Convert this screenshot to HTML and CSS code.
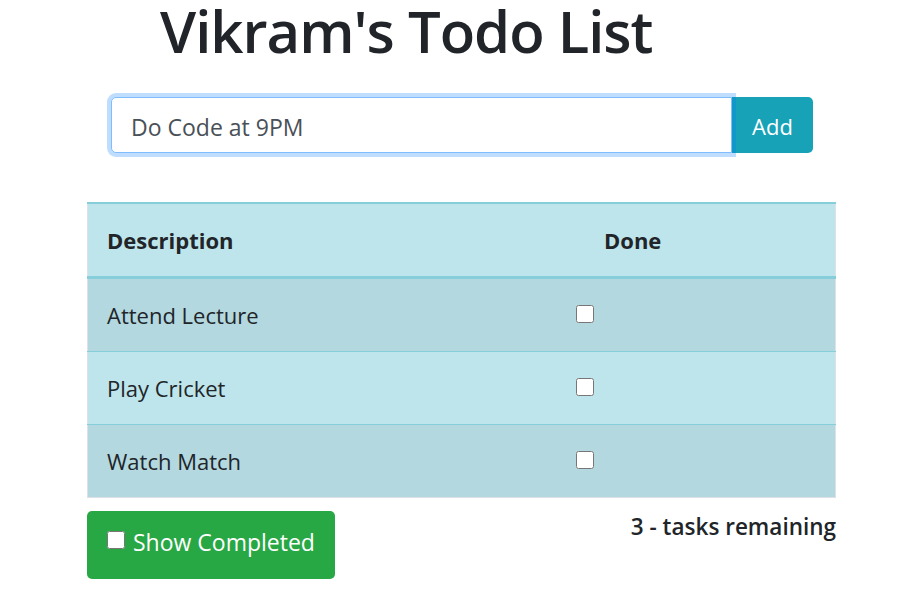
FILE: index.html
```html
<!DOCTYPE html>
<html lang="en">
<head>
<meta charset="utf-8">
<title>Vikram's Todo List</title>
<link rel="stylesheet" href="styles.css">
</head>
<body>
<div class="container">
  <h1 class="title">Vikram's Todo List</h1>
  <div class="input-group">
    <input class="form-control" type="text" value="Do Code at 9PM">
    <button class="btn-add">Add</button>
  </div>
  <table class="todo-table">
    <thead>
      <tr><th class="col-desc">Description</th><th class="col-done">Done</th></tr>
    </thead>
    <tbody>
      <tr class="odd"><td>Attend Lecture</td><td class="cell-check"><input type="checkbox" class="check"></td></tr>
      <tr><td>Play Cricket</td><td class="cell-check"><input type="checkbox" class="check"></td></tr>
      <tr class="odd"><td>Watch Match</td><td class="cell-check"><input type="checkbox" class="check"></td></tr>
    </tbody>
  </table>
  <div class="footer">
    <label class="btn-show"><input type="checkbox" class="check check-show">Show Completed</label>
    <div class="remaining">3 - tasks remaining</div>
  </div>
</div>
</body>
</html>
```

FILE: styles.css
```css
html, body {
  margin: 0;
  padding: 0;
  background: #fff;
}
body {
  font-family: "Open Sans", "Noto Sans", sans-serif;
  color: #212529;
  font-size: 22px;
}
.container {
  width: 749px;
  margin-left: 87px;
}
.title {
  margin: 0;
  padding-left: 73px;
  font-size: 58px;
  font-weight: 600;
  line-height: 61px;
  letter-spacing: -1px;
  color: #212529;
}
.input-group {
  display: flex;
  margin: 36px 0 0 24px;
  width: 702px;
  height: 56px;
}
.form-control {
  flex: 1;
  box-sizing: border-box;
  height: 56px;
  border: 1px solid #80bdff;
  border-radius: 5px 0 0 5px;
  padding: 3px 19px 0;
  font-family: inherit;
  font-size: 23px;
  color: #495057;
  box-shadow: 0 0 0 4px rgba(0, 123, 255, 0.25);
  outline: none;
  position: relative;
  z-index: 1;
}
.btn-add {
  width: 81px;
  border: none;
  background: #17a2b8;
  color: #fff;
  border-radius: 0 5px 5px 0;
  font-family: inherit;
  font-size: 22px;
  padding: 2px 0 0;
}
.todo-table {
  margin-top: 49px;
  width: 749px;
  border-collapse: collapse;
  border: 1px solid #dee2e6;
  border-top: none;
}
.todo-table th, .todo-table td {
  text-align: left;
  padding: 18px 19px;
  line-height: 36px;
  height: 36px;
  vertical-align: top;
}
.todo-table thead tr {
  background: #bee5eb;
}
.todo-table th {
  border-top: 2px solid #86cfda;
  border-bottom: 3px solid #86cfda;
  font-weight: 700;
}
.col-desc {
  width: 450px;
}
.todo-table .col-done {
  padding-left: 28px;
}
.todo-table tbody tr {
  background: #bee5eb;
}
.todo-table tbody tr.odd {
  background: #b3d8df;
}
.todo-table tbody tr + tr td {
  border-top: 1px solid #86cfda;
}
.todo-table .cell-check {
  padding-left: 0;
}
.check {
  width: 18px;
  height: 18px;
  margin: 8px 0 0 0;
  vertical-align: top;
}
.footer {
  display: flex;
  justify-content: space-between;
  align-items: flex-start;
  margin-top: 13px;
}
.btn-show {
  display: flex;
  align-items: center;
  gap: 8px;
  box-sizing: border-box;
  height: 68px;
  padding: 0 20px 6px;
  background: #28a745;
  color: #fff;
  border-radius: 5px;
  font-size: 23px;
}
.check-show {
  margin: 0 0 4px 0;
}
.remaining {
  font-weight: 600;
  font-size: 22.5px;
  line-height: 30px;
  margin-top: 1px;
}
```
